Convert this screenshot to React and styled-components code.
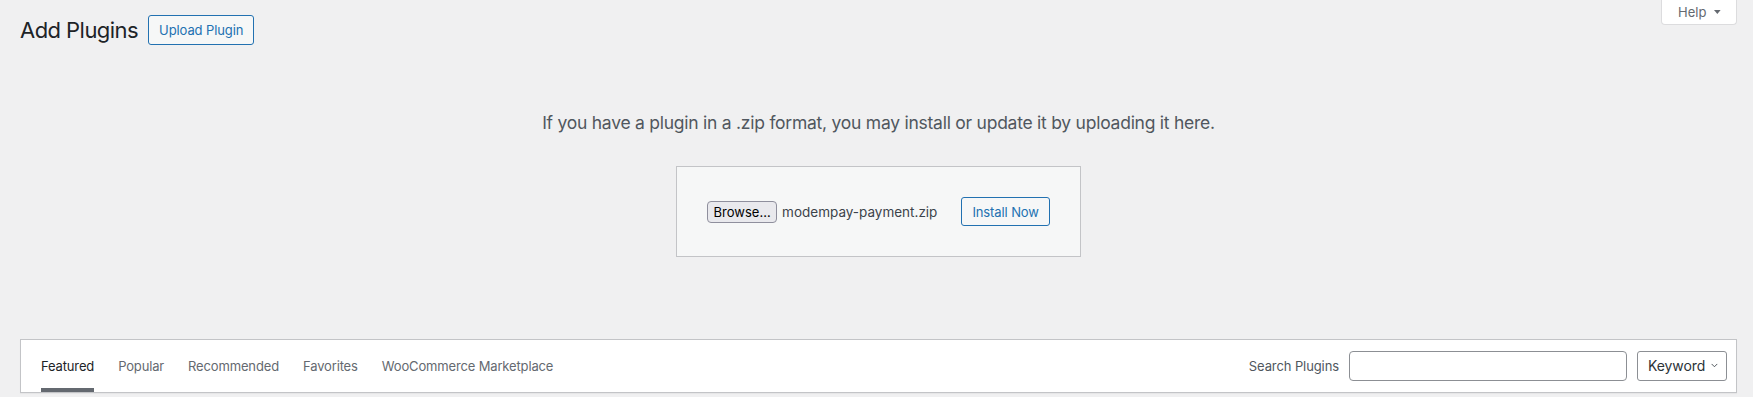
import React from "react";
import styled, { createGlobalStyle } from "styled-components";

const GlobalStyle = createGlobalStyle`
  html, body {
    margin: 0;
    padding: 0;
    background: #f0f0f1;
  }
  body {
    font-family: Inter, "Noto Sans", "Liberation Sans", sans-serif;
    color: #3c434a;
    -webkit-font-smoothing: antialiased;
  }
  #root {
    min-height: 397px;
  }
`;

const Page = styled.div`
  padding: 0 16px 0 20px;
  box-sizing: border-box;
  width: 100%;
`;

const TopRow = styled.div`
  display: flex;
  justify-content: space-between;
  align-items: flex-start;
`;

const TitleGroup = styled.div`
  display: flex;
  align-items: center;
  gap: 10px;
  margin-top: 15px;
  height: 30px;
`;

const Title = styled.h1`
  margin: 0;
  font-size: 22px;
  font-weight: 400;
  line-height: 30px;
  color: #1d2327;
  letter-spacing: -0.55px;
`;

const OutlineButton = styled.button`
  box-sizing: border-box;
  height: ${(p) => p.$h || 30}px;
  padding: 0 10px;
  border: 1px solid #2271b1;
  border-radius: 3px;
  background: #f6f7f7;
  color: #2271b1;
  font-family: inherit;
  font-size: 13px;
  font-weight: 400;
  line-height: 28px;
  letter-spacing: -0.1px;
  cursor: pointer;
  white-space: nowrap;
`;

const HelpTab = styled.button`
  box-sizing: border-box;
  display: flex;
  align-items: center;
  gap: 8px;
  height: 25px;
  width: 76px;
  padding: 0 15px 0 16px;
  border: 1px solid #dcdcde;
  border-top: none;
  border-radius: 0 0 4px 4px;
  background: #fff;
  color: #646970;
  font-family: inherit;
  font-size: 13px;
  line-height: 1;
  cursor: pointer;
`;

const UploadSection = styled.section`
  text-align: center;
`;

const InstallHelp = styled.p`
  margin: 65px 0 0;
  font-size: 17.5px;
  line-height: 26px;
  color: #50575e;
  letter-spacing: -0.25px;
`;

const UploadForm = styled.form`
  box-sizing: border-box;
  display: flex;
  align-items: center;
  width: fit-content;
  margin: 30px auto 0;
  padding: 30px;
  border: 1px solid #c3c4c7;
  background: #f6f7f7;
`;

const FileField = styled.div`
  display: flex;
  align-items: center;
  gap: 5px;
  margin-right: 24px;
`;

const BrowseButton = styled.button`
  box-sizing: border-box;
  height: 22px;
  width: 70px;
  padding: 0;
  border: 1px solid #8f8f9d;
  border-radius: 4px;
  background: #e9e9ed;
  color: #000;
  font-family: inherit;
  font-size: 13px;
  line-height: 20px;
  cursor: pointer;
`;

const FileName = styled.span`
  font-size: 13.5px;
  color: #3c434a;
  white-space: nowrap;
`;

const FilterBar = styled.div`
  box-sizing: border-box;
  display: flex;
  justify-content: space-between;
  align-items: center;
  margin-top: 82px;
  height: 54px;
  padding: 0 9px 0 10px;
  border: 1px solid #c3c4c7;
  background: #fff;
  box-shadow: 0 1px 1px rgba(0, 0, 0, 0.04);
  font-size: 13px;
  color: #50575e;
`;

const FilterLinks = styled.ul`
  display: flex;
  align-self: stretch;
  gap: 24px;
  margin: 0;
  padding: 0 0 0 10px;
  list-style: none;
`;

const FilterLink = styled.li`
  box-sizing: border-box;
  display: flex;
  align-items: center;
  padding-top: 4px;
  border-bottom: 4px solid ${(p) => (p.$current ? "#646970" : "#fff")};
  color: ${(p) => (p.$current ? "#1d2327" : "#646970")};
  font-size: 13px;
  line-height: 18px;
  letter-spacing: -0.15px;
  cursor: pointer;
  white-space: nowrap;
`;

const SearchForm = styled.div`
  display: flex;
  align-items: center;
  gap: 10px;
`;

const SearchLabel = styled.label`
  font-size: 13px;
  color: #50575e;
  letter-spacing: -0.1px;
`;

const SearchInput = styled.input`
  box-sizing: border-box;
  width: 278px;
  height: 30px;
  margin: 0;
  padding: 0 8px;
  border: 1px solid #8c8f94;
  border-radius: 4px;
  background: #fff;
  font-family: inherit;
  font-size: 14px;
  color: #2c3338;
  outline: none;
`;

const TypeSelect = styled.div`
  box-sizing: border-box;
  display: flex;
  align-items: center;
  gap: 6px;
  width: 90px;
  height: 30px;
  margin-top: -1px;
  padding: 0 8px 0 10px;
  border: 1px solid #8c8f94;
  border-radius: 3px;
  background: #fff;
  color: #2c3338;
  font-size: 14px;
  letter-spacing: -0.1px;
  cursor: pointer;
`;

const tabs = ["Featured", "Popular", "Recommended", "Favorites", "WooCommerce Marketplace"];

export default function App() {
  return (
    <>
      <GlobalStyle />
      <Page>
        <TopRow>
          <TitleGroup>
            <Title>Add Plugins</Title>
            <OutlineButton type="button">Upload Plugin</OutlineButton>
          </TitleGroup>
          <HelpTab type="button">
            <span>Help</span>
            <svg width="8" height="6" viewBox="0 0 8 6" aria-hidden="true">
              <path d="M0 0.5 L8 0.5 L4 5.5 Z" fill="#646970" />
            </svg>
          </HelpTab>
        </TopRow>

        <UploadSection>
          <InstallHelp>
            If you have a plugin in a .zip format, you may install or update it by uploading it here.
          </InstallHelp>
          <UploadForm onSubmit={(e) => e.preventDefault()}>
            <FileField>
              <BrowseButton type="button">Browse…</BrowseButton>
              <FileName>modempay-payment.zip</FileName>
            </FileField>
            <OutlineButton type="submit" $h={29}>Install Now</OutlineButton>
          </UploadForm>
        </UploadSection>

        <FilterBar>
          <FilterLinks>
            {tabs.map((t, i) => (
              <FilterLink key={t} $current={i === 0}>
                {t}
              </FilterLink>
            ))}
          </FilterLinks>
          <SearchForm>
            <SearchLabel htmlFor="search-plugins">Search Plugins</SearchLabel>
            <SearchInput id="search-plugins" type="search" />
            <TypeSelect>
              <span>Keyword</span>
              <svg width="11" height="7" viewBox="0 0 11 7" aria-hidden="true">
                <polyline points="1,1 5.5,5.5 10,1" fill="none" stroke="#3c434a" strokeWidth="1.4" />
              </svg>
            </TypeSelect>
          </SearchForm>
        </FilterBar>
      </Page>
    </>
  );
}
